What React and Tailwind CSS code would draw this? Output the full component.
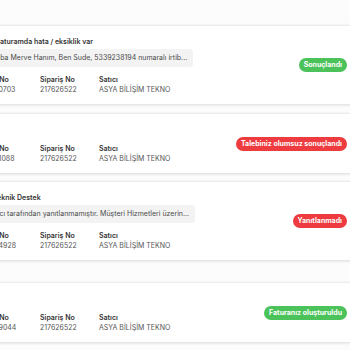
const tickets = [
  {
    no: "217650703",
    title: "Faturamda hata / eksiklik var",
    titleCls: "ml-[17px]",
    msg: "Merhaba Merve Hanım, Ben Sude, 5339238194 numaralı irtib...",
    msgCls: "",
    badge: "Sonuçlandı",
    badgeCls: "bg-[#4cc35a]",
    wrapCls: "mt-[25px]",
  },
  {
    no: "217651088",
    badge: "Talebiniz olumsuz sonuçlandı",
    badgeCls: "bg-[#ee3b40]",
    wrapCls: "mt-[9px]",
  },
  {
    no: "217654928",
    title: "Teknik Destek",
    titleCls: "ml-[14px]",
    msg: "Satıcı tarafından yanıtlanmamıştır. Müşteri Hizmetleri üzerin...",
    msgCls: "ml-[8px]",
    badge: "Yanıtlanmadı",
    badgeCls: "bg-[#ee3b40]",
    wrapCls: "mt-[8px]",
  },
  {
    no: "217659044",
    badge: "Faturanız oluşturuldu",
    badgeCls: "bg-[#4cc35a]",
    wrapCls: "mt-[22px]",
  },
];

function Ticket({ t }) {
  return (
    <div className={`${t.wrapCls} -ml-[21px] w-[381px] shrink-0 bg-white border-t border-[#ececec] shadow-[0_1px_3px_rgba(0,0,0,0.14)] flex items-center pr-[13px]`}>
      <div className="flex-1 pt-[10px] pb-[9px]">
        <div className={`h-[12px] leading-[12px] text-[7px] font-semibold text-[#333] whitespace-nowrap ${t.titleCls || ""}`}>
          {t.title}
        </div>
        {t.msg && (
          <div className="mt-[1px] -ml-[6px] flex w-fit items-center h-[18px] px-[6px] rounded-[3px] bg-[#f3f3f3]">
            <span className={`text-[7px] leading-[10px] text-[#4a4a4a] whitespace-nowrap ${t.msgCls}`}>{t.msg}</span>
          </div>
        )}
        <div className="mt-[8px] flex text-[7px] leading-[10px]">
          {[
            { label: "Talep No", value: t.no, w: "w-[61px]" },
            { label: "Sipariş No", value: "217626522", w: "w-[59px]" },
            { label: "Satıcı", value: "ASYA BİLİŞİM TEKNO", w: "" },
          ].map(c => (
            <div key={c.label} className={c.w}>
              <div className="font-semibold text-[#333]">{c.label}</div>
              <div className="text-[#555]">{c.value}</div>
            </div>
          ))}
        </div>
      </div>
      <span className={`${t.badgeCls} text-white text-[7px] font-bold h-[14px] leading-[14px] px-[5px] rounded-full whitespace-nowrap`}>
        {t.badge}
      </span>
    </div>
  );
}

export default function App() {
  return (
    <div className="w-[350px] h-[350px] overflow-hidden bg-[#fcfcfc] flex flex-col" style={{ fontFamily: "Inter, 'Noto Sans', sans-serif" }}>
      {tickets.map(t => (
        <Ticket key={t.no} t={t} />
      ))}
    </div>
  );
}
